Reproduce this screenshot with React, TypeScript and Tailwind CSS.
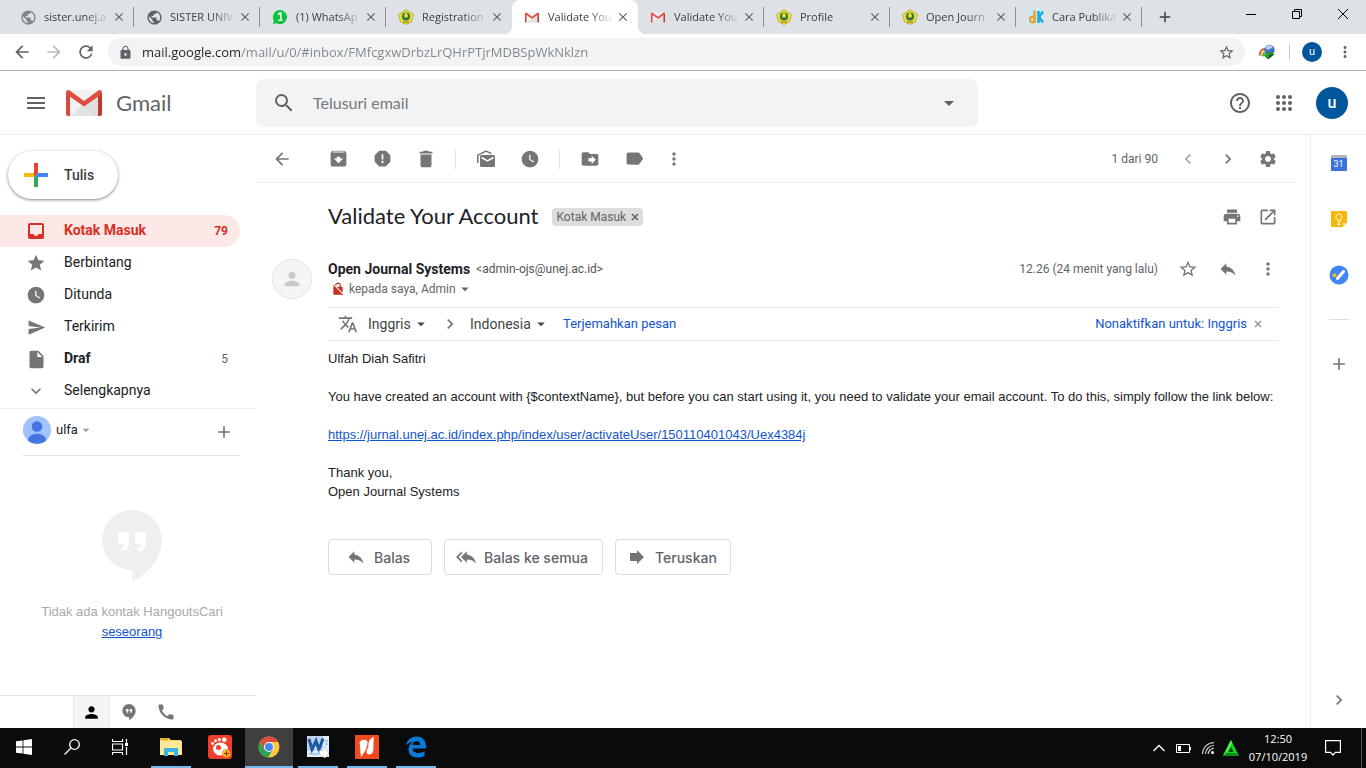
import type { ReactNode } from 'react';
import {
  MdAdd,
  MdArchive,
  MdArrowBack,
  MdArrowDropDown,
  MdArrowForward,
  MdCall,
  MdChevronLeft,
  MdChevronRight,
  MdClose,
  MdDelete,
  MdDriveFileMove,
  MdExpandMore,
  MdHelpOutline,
  MdInsertDriveFile,
  MdLabel,
  MdLock,
  MdMenu,
  MdMoreVert,
  MdNoEncryption,
  MdOpenInNew,
  MdPerson,
  MdPrint,
  MdPublic,
  MdRefresh,
  MdReply,
  MdReplyAll,
  MdReport,
  MdSearch,
  MdSend,
  MdSettings,
  MdStar,
  MdStarBorder,
  MdTranslate,
  MdWatchLater,
} from 'react-icons/md';

/* ---------- logos ---------- */

function GmailLogo({ className }: { className: string }) {
  return (
    <svg viewBox="0 0 36 26" className={className} aria-hidden="true">
      <rect x="1" width="34" height="26" rx="2" fill="#f2f2f2" />
      <path d="M4 26 18 14l14 12z" fill="#e3e3e3" />
      <path d="M18 15 32 4v22h-3z" fill="#d4d4d4" opacity=".6" />
      <path d="M0 2.500V24a2 2 0 0 0 2 2h2V5.500z" fill="#d54b3d" />
      <path d="M36 2.500V24a2 2 0 0 1-2 2h-2V5.500z" fill="#c03a2b" />
      <path d="M0 2.500C0 .3 2.300-.6 4 .7L18 11 32 .7c1.700-1.300 4-.4 4 1.800 0 1-.4 1.700-1.200 2.300L18 16.500 1.200 4.800C.4 4.200 0 3.500 0 2.500z" fill="#e04c3f" />
    </svg>
  );
}

function WhatsAppIcon() {
  return (
    <svg viewBox="0 0 16 16" className="size-4" aria-hidden="true">
      <path d="M8 1a7 7 0 1 1-3.300 13.200L1 15l.9-3.500A7 7 0 0 1 8 1z" fill="#09c43c" />
      <path d="M6 5.500 8 4h.8v7M6.300 11.200h4.200" fill="none" stroke="#fff" strokeWidth="1.600" />
    </svg>
  );
}

function UnejIcon() {
  return (
    <svg viewBox="0 0 16 16" className="size-4" aria-hidden="true">
      <path d="M8 .5 15.500 5.500 13.500 13 8 15.500 2.500 13 .5 5.500z" fill="#e8dc35" stroke="#b5ad45" strokeWidth=".8" strokeLinejoin="round" />
      <circle cx="8" cy="7.500" r="4" fill="#2c7445" />
      <path d="M8 3.500c1.700 1.300 2.300 3 1.600 5H6.400c-.7-2-.1-3.700 1.600-5z" fill="#f1d92c" />
      <path d="M5 13h6" stroke="#8a7a1c" />
    </svg>
  );
}

function DkIcon() {
  return (
    <svg viewBox="0 0 16 16" className="size-4" aria-hidden="true">
      <rect width="16" height="16" fill="#c9eaf7" />
      <path d="M6.500 1.500V14" fill="none" stroke="#eda02c" strokeWidth="2.400" />
      <ellipse cx="4.300" cy="10.500" rx="2.300" ry="2.800" fill="none" stroke="#eda02c" strokeWidth="2.200" />
      <path d="M10.500 2v12M15 2.500 11 8l4 5.500" fill="none" stroke="#23a9dc" strokeWidth="2.600" />
    </svg>
  );
}

function IdmIcon() {
  return (
    <svg viewBox="0 0 16 16" className="size-4" aria-hidden="true">
      <path d="M1 11.500C0 7 4 4 8 5.500" fill="none" stroke="#d23b2b" strokeWidth="1.500" />
      <path d="M2.500 12C2 8.500 5 6.500 8 7.500" fill="none" stroke="#f3c522" strokeWidth="1.500" />
      <path d="M4 12.500C3.500 10 6 8.500 8 9.500" fill="none" stroke="#2fa83a" strokeWidth="1.500" />
      <circle cx="10.500" cy="6" r="5.200" fill="#4571c4" />
      <path d="M6.500 3.500C8.500.5 12.500.8 14 3L11 5 8 6z" fill="#b7d0ec" />
      <path d="M4 10.500h4V8h5v2h2.500L9 15.500z" fill="#1c9a22" />
      <path d="M9 15.500 15.500 10 11 11z" fill="#0f4a12" />
    </svg>
  );
}

function InboxIcon() {
  return (
    <svg viewBox="0 0 20 20" className="size-5" fill="currentColor" aria-hidden="true">
      <path fillRule="evenodd" d="M4 2h12a2 2 0 0 1 2 2v12a2 2 0 0 1-2 2H4a2 2 0 0 1-2-2V4c0-1.100.9-2 2-2zm0 2v9h3.500a2.600 2.600 0 0 0 5 0H16V4z" />
    </svg>
  );
}

function UnreadIcon() {
  return (
    <svg viewBox="0 0 20 20" className="size-5" aria-hidden="true">
      <path d="M1.800 14V6.200L10 2l5.500 2.600" fill="none" stroke="currentColor" strokeWidth="1.500" />
      <rect x="4" y="6" width="15" height="12" rx="1.500" fill="currentColor" />
      <path d="m5.500 8.500 6 3.500 6-3.500" fill="none" stroke="#fff" strokeWidth="1.500" />
    </svg>
  );
}

function ForwardIcon() {
  return (
    <svg viewBox="0 0 20 20" className="size-5 text-[#757575]" aria-hidden="true">
      <path d="M3 6h7V3l7 7-7 7v-3H3z" fill="currentColor" />
    </svg>
  );
}

function SmallCross() {
  return (
    <svg viewBox="0 0 8 8" className="size-2" stroke="currentColor" strokeWidth="1.600" aria-hidden="true">
      <path d="m1 1 6 6M7 1 1 7" />
    </svg>
  );
}

function HangoutsIcon({ className }: { className: string }) {
  return (
    <svg viewBox="0 0 60 72" className={className} aria-hidden="true">
      <path d="M30 0a30 30 0 0 1 30 30c0 17-12 32-29.500 42V60H30a30 30 0 0 1 0-60z" fill="currentColor" />
      <path
        d="M18 22h7a2 2 0 0 1 2 2v9c0 5-3 8-8 8v-3c2 0 3.500-1.500 3.500-4H18a2 2 0 0 1-2-2v-8c0-1 1-2 2-2zM35 22h7a2 2 0 0 1 2 2v9c0 5-3 8-8 8v-3c2 0 3.500-1.500 3.500-4H35a2 2 0 0 1-2-2v-8c0-1 1-2 2-2z"
        fill="#fff"
      />
    </svg>
  );
}

function CalendarIcon() {
  return (
    <span className="block w-4">
      <span className="block h-[3px] rounded-t-[1px] bg-[#b4b6bb]" />
      <span className="block h-[13px] bg-[#3b72e0] text-center text-[9px] leading-[13px] text-white">31</span>
    </span>
  );
}

function KeepIcon() {
  return (
    <svg viewBox="0 0 16 16" className="size-4" aria-hidden="true">
      <path d="M1 0h14a1 1 0 0 1 1 1v11l-4 4H1a1 1 0 0 1-1-1V1a1 1 0 0 1 1-1z" fill="#f7b707" />
      <path d="M12 16v-4h4z" fill="#fde293" />
      <path d="M6.500 10V8.500a3 3 0 1 1 3 0V10zM6.500 12h3M6.500 13.500h3" fill="none" stroke="#fff" strokeWidth="1" />
    </svg>
  );
}

function TasksIcon() {
  return (
    <svg viewBox="0 0 20 20" className="size-5" aria-hidden="true">
      <circle cx="10" cy="10" r="9.500" fill="#4285f4" />
      <path d="m8.500 13.500 6-7" stroke="#fff" strokeWidth="3" strokeLinecap="round" />
      <circle cx="5.500" cy="10.200" r="2" fill="#fbbc04" />
    </svg>
  );
}

/* ---------- browser ---------- */

const tabs: { title: string; icon: ReactNode; active?: boolean; line?: boolean }[] = [
  { title: 'sister.unej.a', icon: <MdPublic size={17} color="#80868b" />, line: true },
  { title: 'SISTER UNIV', icon: <MdPublic size={17} color="#5f6368" />, line: true },
  { title: '(1) WhatsAp', icon: <WhatsAppIcon />, line: true },
  { title: 'Registration', icon: <UnejIcon /> },
  { title: 'Validate You', icon: <GmailLogo className="h-[11px] w-[14px]" />, active: true },
  { title: 'Validate You', icon: <GmailLogo className="h-[11px] w-[14px]" />, line: true },
  { title: 'Profile', icon: <UnejIcon />, line: true },
  { title: 'Open Journ', icon: <UnejIcon />, line: true },
  { title: 'Cara Publika', icon: <DkIcon />, line: true },
];

function TabStrip() {
  return (
    <div className="flex h-[34px] bg-[#dee1e6] pl-2">
      <div className="flex min-w-0" role="tablist">
        {tabs.map((tab, i) => (
          <div
            key={i}
            role="tab"
            aria-selected={!!tab.active}
            className={
              tab.active
                ? 'relative flex w-[126px] items-center rounded-t-lg bg-white pl-3 before:absolute before:bottom-0 before:-left-2 before:size-2 before:bg-[radial-gradient(circle_at_0_0,transparent_8px,white_8px)] after:absolute after:-right-2 after:bottom-0 after:size-2 after:bg-[radial-gradient(circle_at_100%_0,transparent_8px,white_8px)]'
                : 'flex w-[126px] items-center pl-3'
            }
          >
            <span className="grid w-4 shrink-0 place-items-center">{tab.icon}</span>
            <span className="ml-2 w-[68px] font-['Open_Sans',sans-serif] text-[11px] whitespace-nowrap text-[#3c4043] [mask-image:linear-gradient(to_right,black_60%,transparent_98%)]">
              {tab.title}
            </span>
            <button aria-label="Tutup tab" className="text-[#5f6368]">
              <MdClose size={14} />
            </button>
            {tab.line && <span className="ml-auto h-5 w-px bg-[#8b8f94]" />}
          </div>
        ))}
      </div>
      <button aria-label="Tab baru" className="ml-[14px] text-[#3c4043]">
        <MdAdd size={18} />
      </button>
      <div className="ml-auto flex h-7 text-black">
        <button aria-label="Minimalkan" className="grid w-[46px] place-items-center">
          <svg viewBox="0 0 10 10" className="size-[10px]" stroke="currentColor">
            <path d="M0 5.500h10" />
          </svg>
        </button>
        <button aria-label="Pulihkan" className="grid w-[46px] place-items-center">
          <svg viewBox="0 0 10 10" className="size-[10px]" fill="none" stroke="currentColor">
            <path d="M.5 2.500h7v7h-7zM2.500 2.500v-2h7v7h-2" />
          </svg>
        </button>
        <button aria-label="Tutup" className="grid w-[46px] place-items-center">
          <svg viewBox="0 0 10 10" className="size-[10px]" stroke="currentColor">
            <path d="m0 0 10 10M10 0 0 10" />
          </svg>
        </button>
      </div>
    </div>
  );
}

function AddressBar() {
  return (
    <div className="flex h-[37px] items-center border-b border-[#b0b0b0] bg-white pr-3 pl-[6px] text-[#5f6368]">
      <button aria-label="Kembali" className="grid w-8 place-items-center">
        <MdArrowBack size={20} />
      </button>
      <button aria-label="Maju" className="grid w-8 place-items-center text-[#babcbe]">
        <MdArrowForward size={20} />
      </button>
      <button aria-label="Muat ulang" className="grid w-8 place-items-center">
        <MdRefresh size={20} />
      </button>
      <div className="ml-[6px] flex h-7 flex-1 items-center rounded-full bg-[#f1f3f4] px-[10px]">
        <MdLock size={15} />
        <input
          aria-label="Alamat"
          readOnly
          value="mail.google.com/mail/u/0/#inbox/FMfcgxwDrbzLrQHrPTjrMDBSpWkNklzn"
          className="ml-[9px] h-6 min-w-0 flex-1 bg-[linear-gradient(to_right,#202124_99px,#80868b_99px)] bg-clip-text font-['Open_Sans',sans-serif] text-[13px] text-transparent outline-none"
        />
        <MdStarBorder size={17} />
      </div>
      <div className="flex items-center">
        <span className="ml-[14px]">
          <IdmIcon />
        </span>
        <span className="ml-[14px] h-4 w-px bg-[#c9ccd0]" />
        <span className="ml-3 grid size-5 place-items-center rounded-full bg-[#01579b] text-[11px] text-white">u</span>
        <button aria-label="Menu" className="ml-[14px]">
          <MdMoreVert size={18} />
        </button>
      </div>
    </div>
  );
}

/* ---------- gmail ---------- */

function Header() {
  return (
    <header className="flex h-16 items-center border-b border-[#ececec] text-[#5f6368]">
      <div className="flex w-64 shrink-0 items-center pl-6">
        <button aria-label="Menu utama">
          <MdMenu size={24} />
        </button>
        <GmailLogo className="ml-[18px] h-[26px] w-9" />
        <span className="ml-[14px] font-[Lato,sans-serif] text-[22px]">Gmail</span>
      </div>
      <form className="flex h-12 w-[722px] items-center rounded-lg bg-[#f1f3f4] pr-[17px] pl-4">
        <MdSearch size={24} />
        <input
          aria-label="Telusuri email"
          placeholder="Telusuri email"
          className="ml-[17px] min-w-0 flex-1 font-[Lato,sans-serif] text-[16px] outline-none placeholder:text-[#75797d]"
        />
        <button type="button" aria-label="Opsi penelusuran">
          <MdArrowDropDown size={24} />
        </button>
      </form>
      <div className="ml-auto flex items-center pr-[18px]">
        <button aria-label="Bantuan" className="mr-5">
          <MdHelpOutline size={24} />
        </button>
        <button aria-label="Aplikasi Google" className="mr-5">
          <svg viewBox="0 0 24 24" className="size-6" fill="currentColor" aria-hidden="true">
            {[6, 12, 18].map((y) => [6, 12, 18].map((x) => <circle key={`${x}-${y}`} cx={x} cy={y} r="2" />))}
          </svg>
        </button>
        <button aria-label="Akun" className="grid size-8 place-items-center rounded-full bg-[#01579b] text-[16px] font-medium text-white">
          u
        </button>
      </div>
    </header>
  );
}

const folders = [
  { name: 'Kotak Masuk', icon: <InboxIcon />, count: '79', style: 'rounded-r-full bg-[#fce8e6] font-bold text-[#d93025]', tint: '' },
  { name: 'Berbintang', icon: <MdStar size={20} />, count: '', style: 'text-[#202124]', tint: 'text-[#757575]' },
  { name: 'Ditunda', icon: <MdWatchLater size={20} />, count: '', style: 'text-[#202124]', tint: 'text-[#757575]' },
  { name: 'Terkirim', icon: <MdSend size={19} />, count: '', style: 'text-[#202124]', tint: 'text-[#757575]' },
  { name: 'Draf', icon: <MdInsertDriveFile size={21} />, count: '5', style: 'font-bold text-[#202124]', tint: 'text-[#757575]' },
  { name: 'Selengkapnya', icon: <MdExpandMore size={20} />, count: '', style: 'text-[#202124]', tint: 'text-[#757575]' },
];

function Sidebar() {
  return (
    <aside className="flex w-64 shrink-0 flex-col">
      <button className="mt-4 ml-2 flex h-12 w-[110px] items-center rounded-full bg-white pl-4 text-[14px] font-medium text-[#3c4043] shadow-[0_1px_2px_0_rgba(60,64,67,.4),0_1px_3px_1px_rgba(60,64,67,.2)]">
        <svg viewBox="0 0 24 24" className="mr-4 size-6" aria-hidden="true">
          <path d="M10 0h4v10l-4 4z" fill="#ea4335" />
          <path d="M10 14h4v10h-4z" fill="#34a853" />
          <path d="M0 10h10v4H0z" fill="#fbbc04" />
          <path d="M14 10h10v4H10z" fill="#4285f4" />
        </svg>
        Tulis
      </button>

      <nav className="mt-4 mr-4">
        {folders.map((f) => (
          <a key={f.name} href="#" className={`flex h-8 items-center pr-3 pl-6 text-[14px] ${f.style}`}>
            <span className={`mr-4 grid size-6 place-items-center ${f.tint}`}>{f.icon}</span>
            <span className="pb-0.5">{f.name}</span>
            <span className={f.name === 'Draf' ? 'ml-auto text-[12px] font-normal text-[#5f6368]' : 'ml-auto text-[12px]'}>{f.count}</span>
          </a>
        ))}
      </nav>

      <div className="mt-[1px] border-t border-[#ececec] pt-[7px] pr-4 pl-[23px]">
        <div className="flex h-10 items-start border-b border-[#e3e3e3]">
          <svg viewBox="0 0 28 28" className="size-7" aria-hidden="true">
            <circle cx="14" cy="14" r="14" fill="#a1c2fa" />
            <circle cx="14" cy="10.500" r="5.300" fill="#4376e0" />
            <path d="M5 24.500c0-9 18-9 18 0a14 14 0 0 1-18 0z" fill="#4376e0" />
          </svg>
          <button className="ml-[5px] flex h-7 items-center text-[13px] text-[#202124]">
            ulfa <MdArrowDropDown size={16} color="#999" />
          </button>
          <button aria-label="Percakapan baru" className="mt-[6px] mr-[6px] ml-auto text-[#757575]">
            <MdAdd size={20} />
          </button>
        </div>
      </div>

      <div className="mt-[54px] flex flex-1 flex-col items-center pl-2 text-center font-['Liberation_Sans',Arial,sans-serif] text-[13px] leading-5 text-[#aaa]">
        <HangoutsIcon className="h-[72px] w-[60px] text-[#efefef]" />
        <p className="mt-5">Tidak ada kontak HangoutsCari</p>
        <a href="#" className="text-[#15c] underline">seseorang</a>
      </div>

      <div className="flex h-[33px] border-t border-[#e0e0e0] pl-[73px] text-[#757575]">
        <button aria-label="Kontak" className="grid w-[37px] place-items-center border-x border-[#e8e8e8] bg-[#f5f5f5] text-black">
          <MdPerson size={19} />
        </button>
        <button aria-label="Hangouts" className="grid w-[37px] place-items-center">
          <HangoutsIcon className="h-4 w-[14px]" />
        </button>
        <button aria-label="Telepon" className="grid w-[37px] place-items-center">
          <MdCall size={20} />
        </button>
      </div>
    </aside>
  );
}

function ToolButton({ label, narrow, children }: { label: string; narrow?: boolean; children: ReactNode }) {
  return (
    <button aria-label={label} className={narrow ? 'grid h-9 w-9 place-items-center' : 'grid h-9 w-11 place-items-center'}>
      {children}
    </button>
  );
}

function Toolbar() {
  return (
    <div className="mr-4 flex h-12 items-center border-b border-[#ececec] px-2 text-[#757575]">
      <ToolButton label="Kembali ke Kotak Masuk" narrow>
        <MdArrowBack size={20} />
      </ToolButton>
      <div className="ml-4 flex">
        <ToolButton label="Arsipkan"><MdArchive size={21} /></ToolButton>
        <ToolButton label="Laporkan spam"><MdReport size={21} /></ToolButton>
        <ToolButton label="Hapus"><MdDelete size={22} /></ToolButton>
      </div>
      <span className="mx-[7px] h-5 w-px bg-[#e4e4e4]" />
      <div className="ml-px flex">
        <ToolButton label="Tandai belum dibaca"><UnreadIcon /></ToolButton>
        <ToolButton label="Tunda"><MdWatchLater size={20} /></ToolButton>
      </div>
      <span className="mx-[7px] h-5 w-px bg-[#e4e4e4]" />
      <div className="ml-px flex">
        <ToolButton label="Pindahkan ke"><MdDriveFileMove size={20} /></ToolButton>
        <ToolButton label="Label"><MdLabel size={21} /></ToolButton>
        <ToolButton label="Lainnya" narrow><MdMoreVert size={20} /></ToolButton>
      </div>
      <span className="mr-3 ml-auto text-[12px] text-[#5f6368]">1 dari 90</span>
      <div className="flex gap-1">
        <ToolButton label="Lebih baru" narrow><MdChevronLeft size={20} color="#a8a8a8" /></ToolButton>
        <ToolButton label="Lebih lama" narrow><MdChevronRight size={20} /></ToolButton>
        <ToolButton label="Setelan" narrow><MdSettings size={20} /></ToolButton>
      </div>
    </div>
  );
}

function TranslateBar() {
  return (
    <div className="mr-2 flex h-[34px] items-center border-y border-[#ececec] text-[14px] text-[#444]">
      <MdTranslate size={20} color="#757575" className="ml-[10px]" />
      <select aria-label="Bahasa asal" className="ml-[10px] w-11 appearance-none outline-none">
        <option>Inggris</option>
      </select>
      <MdArrowDropDown size={18} />
      <MdChevronRight size={20} className="mx-[10px] text-[#757575]" />
      <select aria-label="Bahasa tujuan" className="w-[62px] appearance-none outline-none">
        <option>Indonesia</option>
      </select>
      <MdArrowDropDown size={18} />
      <a href="#" className="ml-[13px] text-[13px] text-[#15c]">Terjemahkan pesan</a>
      <a href="#" className="ml-auto text-[13px] text-[#15c]">Nonaktifkan untuk: Inggris</a>
      <button aria-label="Tutup terjemahan" className="mr-4 ml-[7px] text-[#999]">
        <SmallCross />
      </button>
    </div>
  );
}

function ReplyButton({ icon, width, children }: { icon: ReactNode; width: string; children: ReactNode }) {
  return (
    <button className={`flex h-9 items-center gap-2 rounded border border-[#dadce0] pl-[17px] font-[Inter,sans-serif] text-[14px] font-medium text-[#5f6368] ${width}`}>
      {icon}
      {children}
    </button>
  );
}

function Message() {
  return (
    <article className="pr-6 pl-[72px]">
      <div className="mt-4 flex h-9 items-center">
        <h1 className="pb-[3px] font-[Lato,sans-serif] text-[22px] text-[#202124]">Validate Your Account</h1>
        <span className="ml-[14px] flex h-[18px] items-center rounded bg-[#ddd] px-1 text-[12px] text-[#666]">
          Kotak Masuk
          <button aria-label="Hapus label" className="ml-[5px]">
            <SmallCross />
          </button>
        </span>
        <div className="ml-auto flex text-[#757575]">
          <ToolButton label="Cetak" narrow><MdPrint size={20} /></ToolButton>
          <ToolButton label="Buka di jendela baru" narrow><MdOpenInNew size={20} /></ToolButton>
        </div>
      </div>

      <div className="mt-4 -ml-14 flex h-14">
        <span className="mt-2 mr-4 grid size-10 place-items-center rounded-full border border-[#e2e2e2] bg-[#f5f5f5] text-[#c8c8c8]">
          <MdPerson size={22} />
        </span>
        <div className="flex-1">
          <div className="flex h-9 items-center">
            <span className="text-[14px] font-bold text-[#202124]">Open Journal Systems</span>
            <span className="ml-[6px] text-[12px] text-[#555]">&lt;admin-ojs@unej.ac.id&gt;</span>
            <span className="ml-auto text-[12px] text-[#5f6368]">12.26 (24 menit yang lalu)</span>
            <div className="ml-3 flex gap-1 text-[#757575]">
              <ToolButton label="Beri bintang" narrow><MdStarBorder size={20} /></ToolButton>
              <ToolButton label="Balas" narrow><MdReply size={20} /></ToolButton>
              <ToolButton label="Lainnya" narrow><MdMoreVert size={20} /></ToolButton>
            </div>
          </div>
          <button className="-mt-2 flex h-5 items-center pl-[3px] text-[12px] text-[#666]">
            <MdNoEncryption size={14} color="#c5341f" className="mr-1" />
            kepada saya, Admin
            <MdArrowDropDown size={18} />
          </button>
        </div>
      </div>

      <TranslateBar />

      <div className="mt-2 font-['Liberation_Sans',Arial,sans-serif] text-[13px] leading-[19px] text-[#222]">
        <p>Ulfah Diah Safitri</p>
        <p className="mt-[19px]">
          You have created an account with {'{$contextName}'}, but before you can start using it, you need to validate your email account. To do
          this, simply follow the link below:
        </p>
        <p className="mt-[19px]">
          <a href="#" className="text-[#15c] underline">
            https://jurnal.unej.ac.id/index.php/index/user/activateUser/150110401043/Uex4384j
          </a>
        </p>
        <p className="mt-[19px]">
          Thank you,
          <br />
          Open Journal Systems
        </p>
      </div>

      <div className="mt-[38px] flex gap-3">
        <ReplyButton width="w-[104px]" icon={<MdReply size={20} color="#757575" />}>Balas</ReplyButton>
        <ReplyButton width="w-[159px]" icon={<MdReplyAll size={20} color="#757575" className="-ml-[6px]" />}>Balas ke semua</ReplyButton>
        <ReplyButton width="w-[116px]" icon={<span className="-ml-[6px]"><ForwardIcon /></span>}>Teruskan</ReplyButton>
      </div>
    </article>
  );
}

function SidePanel() {
  return (
    <aside className="flex w-14 shrink-0 flex-col items-center border-l border-[#ececec] text-[#757575]">
      <button aria-label="Kalender" className="mt-5 h-4"><CalendarIcon /></button>
      <button aria-label="Keep" className="mt-10"><KeepIcon /></button>
      <button aria-label="Tasks" className="mt-[38px]"><TasksIcon /></button>
      <span className="mt-[34px] h-px w-5 bg-[#dadce0]" />
      <button aria-label="Dapatkan add-on" className="mt-[34px]"><MdAdd size={20} /></button>
      <button aria-label="Sembunyikan panel" className="mt-auto mb-[18px]"><MdChevronRight size={20} /></button>
    </aside>
  );
}

/* ---------- windows taskbar ---------- */

function TaskApp({ label, state = 'idle', children }: { label: string; state?: 'open' | 'focus' | 'idle'; children: ReactNode }) {
  const look = {
    idle: 'w-12 border-transparent',
    open: 'mx-1 w-10 border-[#76b9ed]',
    focus: 'w-12 border-[#76b9ed] bg-[#3f3f3f]',
  }[state];
  return (
    <button aria-label={label} className={`grid h-10 place-items-center border-b-2 ${look}`}>
      {children}
    </button>
  );
}

function Taskbar() {
  return (
    <footer className="flex h-10 items-center bg-[#0b0b0b] text-white">
      <TaskApp label="Mulai">
        <svg viewBox="0 0 16 16" className="size-4" fill="currentColor">
          <path d="M0 2.300 6.600 1.400v6.200H0zM7.400 1.300 16 0v7.600H7.400zM0 8.400h6.600v6.200L0 13.700zM7.400 8.400H16V16l-8.600-1.300z" />
        </svg>
      </TaskApp>
      <TaskApp label="Cari">
        <svg viewBox="0 0 16 16" className="size-4" fill="none" stroke="currentColor" strokeWidth="1.300">
          <circle cx="10.500" cy="5.500" r="4.800" />
          <path d="M7 9 .5 15.500" />
        </svg>
      </TaskApp>
      <TaskApp label="Tampilan tugas">
        <svg viewBox="0 0 16 16" className="size-4" fill="none" stroke="currentColor" strokeWidth="1.200">
          <path d="M.5 0v2.500h10V0M.5 5h10v6H.5zM.5 16v-2.500h10V16M14.500 0v4M14.500 8v8" />
          <path d="M13 4h3v3h-3z" fill="currentColor" stroke="none" />
        </svg>
      </TaskApp>
      <div className="ml-[3px] flex gap-px">
        <TaskApp label="File Explorer" state="open">
          <svg viewBox="0 0 22 20" className="h-5 w-[22px]">
            <path d="M0 1h9l2 2h10v15H0z" fill="#f7d060" />
            <path d="M1 1h7v2H1z" fill="#e9a825" />
            <path d="M0 4h22v14H0z" fill="#ffe896" />
            <path d="M4 11h14v8h-4v-4H8v4H4z" fill="#39b4e6" />
          </svg>
        </TaskApp>
        <TaskApp label="GOM Player">
          <svg viewBox="0 0 24 24" className="size-6">
            <rect width="24" height="24" rx="3" fill="#ee3f2b" />
            <ellipse cx="12.500" cy="14" rx="7.500" ry="6.500" fill="#fff" />
            <circle cx="10.500" cy="12.500" r="2.500" fill="#ee3f2b" />
            <g fill="#fff">
              <circle cx="4.500" cy="8.500" r="1.400" />
              <circle cx="7.500" cy="5.800" r="1.500" />
              <circle cx="11.300" cy="4.600" r="1.600" />
              <circle cx="16.300" cy="4.800" r="2.300" />
            </g>
            <circle cx="18.500" cy="18.500" r="4" fill="#ffd51f" stroke="#ee3f2b" strokeWidth=".6" />
            <path d="M16 18.500h5M18.500 16v5" stroke="#b3301d" strokeWidth="1.300" />
          </svg>
        </TaskApp>
        <TaskApp label="Google Chrome" state="focus">
          <svg viewBox="0 0 22 22" className="size-[22px]">
            <circle cx="11" cy="11" r="10.500" fill="#fbc93a" />
            <path d="M1.900 5.700A10.500 10.500 0 0 1 20.100 6H11l-4.500 7.500z" fill="#dd4b3e" />
            <path d="M1.900 5.700A10.500 10.500 0 0 0 10 21.500l5-8-8.500 0z" fill="#2fa154" />
            <circle cx="11" cy="11" r="5" fill="#fff" />
            <circle cx="11" cy="11" r="4" fill="#4688f1" />
          </svg>
        </TaskApp>
        <TaskApp label="Word" state="open">
          <svg viewBox="0 0 22 22" className="size-[22px]">
            <rect width="22" height="21" fill="#e4eefa" />
            <path d="M0 0h16v15H0z" fill="#bdd4ef" />
            <path d="m2 3 3 10.500L9 5l3 8.500L16 2.500" fill="none" stroke="#1f57a4" strokeWidth="3" />
            <path d="M2 18h10M18 5h3M18 8h3" stroke="#7ba4d8" />
            <path d="m12 15 4-1 2-4 1 4 3 3-4 5-5-3z" fill="#fff" stroke="#a7bcd8" strokeWidth=".5" />
          </svg>
        </TaskApp>
        <TaskApp label="Nitro" state="open">
          <svg viewBox="0 0 24 24" className="size-6">
            <rect width="24" height="24" fill="#f04a1e" />
            <path d="M4.500 7.500C6 5 8 4.500 10.500 5c2 .5 2.300 2 2.200 4L11.500 14 6 22c-1-5-.5-10-1.500-14.500z" fill="#fff" />
            <path d="M12 10.500C13.500 6 15.500 3 19 2c-1 5 0 10-1 15-1.500 2.500-3.500 3-5.500 2-1.200-.8-1-2-1-3.500l2.500-5z" fill="#fff" />
            <path d="m13.500 7-2.500 9" stroke="#f04a1e" strokeWidth=".8" />
          </svg>
        </TaskApp>
        <TaskApp label="Edge" state="open">
          <svg viewBox="0 0 22 22" className="size-[22px]">
            <path
              d="M1 9.500C2 4 6 .5 11.500.5c6 0 9.500 4 9.500 9.500v2.500H7.500c.2 3 2.700 4.500 5.800 4.500 2.400 0 4.500-.6 6.200-1.700V20c-2 1-4.500 1.600-7.200 1.600-5 0-8.800-3-8.800-8 0-3.200 1.600-6 4.500-7.500C4.800 6.300 2.700 7.500 1 9.500zM7.600 9h7.600c0-2.300-1-3.700-3.600-3.700-2.300 0-3.700 1.500-4 3.700z"
              fill="#0a7ad8"
            />
          </svg>
        </TaskApp>
      </div>

      <div className="ml-auto flex items-center">
        <svg viewBox="0 0 12 8" className="h-2 w-3" fill="none" stroke="currentColor" strokeWidth="1.300">
          <path d="m.5 7 5.500-5.500L11.500 7" />
        </svg>
        <svg viewBox="0 0 15 9" className="ml-[11px] h-[9px] w-[15px]">
          <path d="M.5.5h13v8H.5zM14.500 3v3" fill="none" stroke="#fff" />
          <path d="M2 2h3v5H2z" fill="#fff" />
        </svg>
        <svg viewBox="0 0 12 12" className="ml-[11px] size-3" fill="none" stroke="#ccc" strokeWidth="1.200">
          <path d="M.6 12A11.400 11.400 0 0 1 12 .6M3.500 12A8.500 8.500 0 0 1 12 3.500M6.300 12A5.700 5.700 0 0 1 12 6.300" />
          <circle cx="10.500" cy="10.500" r="1.500" fill="#fff" stroke="none" />
        </svg>
        <svg viewBox="0 0 16 16" className="ml-[9px] size-4">
          <path d="M8 0 16 16H0z" fill="#12d91f" />
          <path d="M8 0 0 16l2-1L9 3z" fill="#5af066" />
          <path d="m0 16 3-3h10l3 3z" fill="#0a8a18" />
          <path d="m8 7 2.500 5h-5z" fill="#0b3d10" />
        </svg>
        <div className="ml-[9px] w-[60px] text-center font-['Open_Sans',sans-serif] text-[11px] leading-[18px]">
          12:50
          <br />
          07/10/2019
        </div>
        <button aria-label="Notifikasi" className="mr-5 ml-[17px]">
          <svg viewBox="0 0 16 16" className="size-4" fill="none" stroke="currentColor" strokeWidth="1.200">
            <path d="M.6.6h14.800v11.800h-5L8 15l-2.400-2.600h-5z" />
          </svg>
        </button>
        <span className="mr-1 h-10 w-px bg-[#555]" />
      </div>
    </footer>
  );
}

export default function App() {
  return (
    <div className="flex min-h-screen flex-col bg-white font-[Roboto,sans-serif] text-[#202124]">
      <TabStrip />
      <AddressBar />
      <Header />
      <div className="flex flex-1">
        <Sidebar />
        <main className="min-w-0 flex-1">
          <Toolbar />
          <Message />
        </main>
        <SidePanel />
      </div>
      <Taskbar />
    </div>
  );
}
